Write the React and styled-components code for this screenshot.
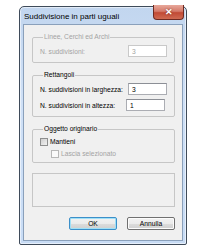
import React from "react";
import styled, { createGlobalStyle } from "styled-components";

const GlobalStyle = createGlobalStyle`
  html, body {
    margin: 0;
    padding: 0;
    background: #ffffff;
  }
  body {
    font-family: "Liberation Sans", Arial, sans-serif;
  }
`;

const Page = styled.div`
  width: 213px;
  height: 252px;
  padding: 6px 0 0 19px;
  box-sizing: border-box;
`;

const Window = styled.div`
  width: 168px;
  height: 239px;
  box-sizing: border-box;
  border: 1px solid #3f4b5a;
  border-radius: 5px 5px 2px 2px;
  background: linear-gradient(180deg, #c2d6ef 0%, #cfe0f6 40%, #c8dcf5 100%);
  display: flex;
  flex-direction: column;
  box-shadow: inset 0 0 0 1px rgba(255, 255, 255, 0.55);
`;

const TitleBar = styled.div`
  height: 17px;
  display: flex;
  align-items: center;
  padding-left: 4px;
`;

const Title = styled.span`
  font-size: 8px;
  color: #000;
  flex: 1;
  padding-top: 1px;
`;

const CloseButton = styled.div`
  align-self: flex-start;
  margin-top: -2px;
  margin-right: 2px;
  width: 31px;
  height: 15px;
  box-sizing: border-box;
  border: 1px solid #6d2a22;
  border-top: none;
  border-radius: 0 0 4px 4px;
  background: linear-gradient(180deg, #e8a89b 0%, #d47a6a 45%, #c14a35 55%, #cf6a52 100%);
  display: flex;
  align-items: center;
  justify-content: center;
  color: #fff;
  font-size: 9px;
  font-weight: bold;
  text-shadow: 0 0 2px #6d2a22;
`;

const Client = styled.div`
  flex: 1;
  margin: 0 3px 3px 3px;
  border: 1px solid #8aa0bb;
  background: #f0f0f0;
  display: flex;
  flex-direction: column;
  padding: 8px 7px 0 8px;
`;

const Group = styled.fieldset`
  margin: ${(p) => p.$top || 0}px 0 0 0;
  padding: ${(p) => p.$pad || "4px 0 5px 7px"};
  border: 1px solid #c6c6c6;
  border-radius: 2px;
  min-width: 0;
  display: flex;
  flex-direction: column;
  gap: ${(p) => p.$gap || 4}px;
`;

const Legend = styled.legend`
  font-size: 6.7px;
  line-height: 8px;
  padding: 0 1px;
  margin-left: 3px;
  color: ${(p) => (p.$disabled ? "#a3a3a3" : "#000")};
`;

const Row = styled.div`
  display: flex;
  align-items: center;
  height: 12px;
`;

const Label = styled.span`
  width: ${(p) => p.$width}px;
  font-size: 6.7px;
  color: ${(p) => (p.$disabled ? "#a3a3a3" : "#000")};
  white-space: nowrap;
`;

const Field = styled.div`
  width: 39px;
  height: 12px;
  box-sizing: border-box;
  border: 1px solid ${(p) => (p.$disabled ? "#c9c9c9" : "#abadb3")};
  border-top-color: ${(p) => (p.$disabled ? "#c9c9c9" : "#8c8f96")};
  background: #fff;
  font-size: 6.7px;
  padding-left: 3px;
  display: flex;
  align-items: center;
  color: ${(p) => (p.$disabled ? "#a3a3a3" : "#000")};
`;

const CheckRow = styled.div`
  display: flex;
  align-items: center;
  height: 11px;
  padding-left: ${(p) => p.$indent || 0}px;
`;

const CheckBox = styled.span`
  width: 8px;
  height: 8px;
  box-sizing: border-box;
  border: 1px solid ${(p) => (p.$disabled ? "#b8b8b8" : "#8e8f8f")};
  background: ${(p) =>
    p.$disabled
      ? "#fafafa"
      : "linear-gradient(135deg, #cfcfcf 0%, #e4e4e4 60%, #f2f2f2 100%)"};
  margin-right: 2px;
`;

const CheckLabel = styled.span`
  font-size: 6.7px;
  color: ${(p) => (p.$disabled ? "#a3a3a3" : "#000")};
`;

const Placeholder = styled.div`
  margin-top: 10px;
  height: 34px;
  box-sizing: border-box;
  border: 1px solid #c6c6c6;
`;

const ButtonRow = styled.div`
  margin-top: 10px;
  display: flex;
  justify-content: flex-end;
  gap: 10px;
`;

const Button = styled.div`
  width: 48px;
  height: 13px;
  box-sizing: border-box;
  border: 1px solid ${(p) => (p.$default ? "#3c8fc9" : "#707070")};
  border-radius: 2px;
  background: linear-gradient(180deg, #f2f2f2 0%, #ebebeb 50%, #dddddd 51%, #cfcfcf 100%);
  box-shadow: ${(p) => (p.$default ? "inset 0 0 0 1px #9fe0f7" : "inset 0 0 0 1px #fcfcfc")};
  font-size: 6.7px;
  color: #000;
  display: flex;
  align-items: center;
  justify-content: center;
`;

export default function App() {
  return (
    <>
      <GlobalStyle />
      <Page>
        <Window>
          <TitleBar>
            <Title>Suddivisione in parti uguali</Title>
            <CloseButton>✕</CloseButton>
          </TitleBar>
          <Client>
            <Group>
              <Legend $disabled>Linee, Cerchi ed Archi</Legend>
              <Row>
                <Label $width={88} $disabled>N. suddivisioni:</Label>
                <Field $disabled>3</Field>
              </Row>
            </Group>
            <Group $top={8}>
              <Legend>Rettangoli</Legend>
              <Row>
                <Label $width={88}>N. suddivisioni in larghezza:</Label>
                <Field>3</Field>
              </Row>
              <Row>
                <Label $width={86}>N. suddivisioni in altezza:</Label>
                <Field>1</Field>
              </Row>
            </Group>
            <Group $top={8} $pad="3px 0 3px 7px" $gap={1}>
              <Legend>Oggetto originario</Legend>
              <CheckRow>
                <CheckBox />
                <CheckLabel>Mantieni</CheckLabel>
              </CheckRow>
              <CheckRow $indent={11}>
                <CheckBox $disabled />
                <CheckLabel $disabled>Lascia selezionato</CheckLabel>
              </CheckRow>
            </Group>
            <Placeholder />
            <ButtonRow>
              <Button $default>OK</Button>
              <Button>Annulla</Button>
            </ButtonRow>
          </Client>
        </Window>
      </Page>
    </>
  );
}
